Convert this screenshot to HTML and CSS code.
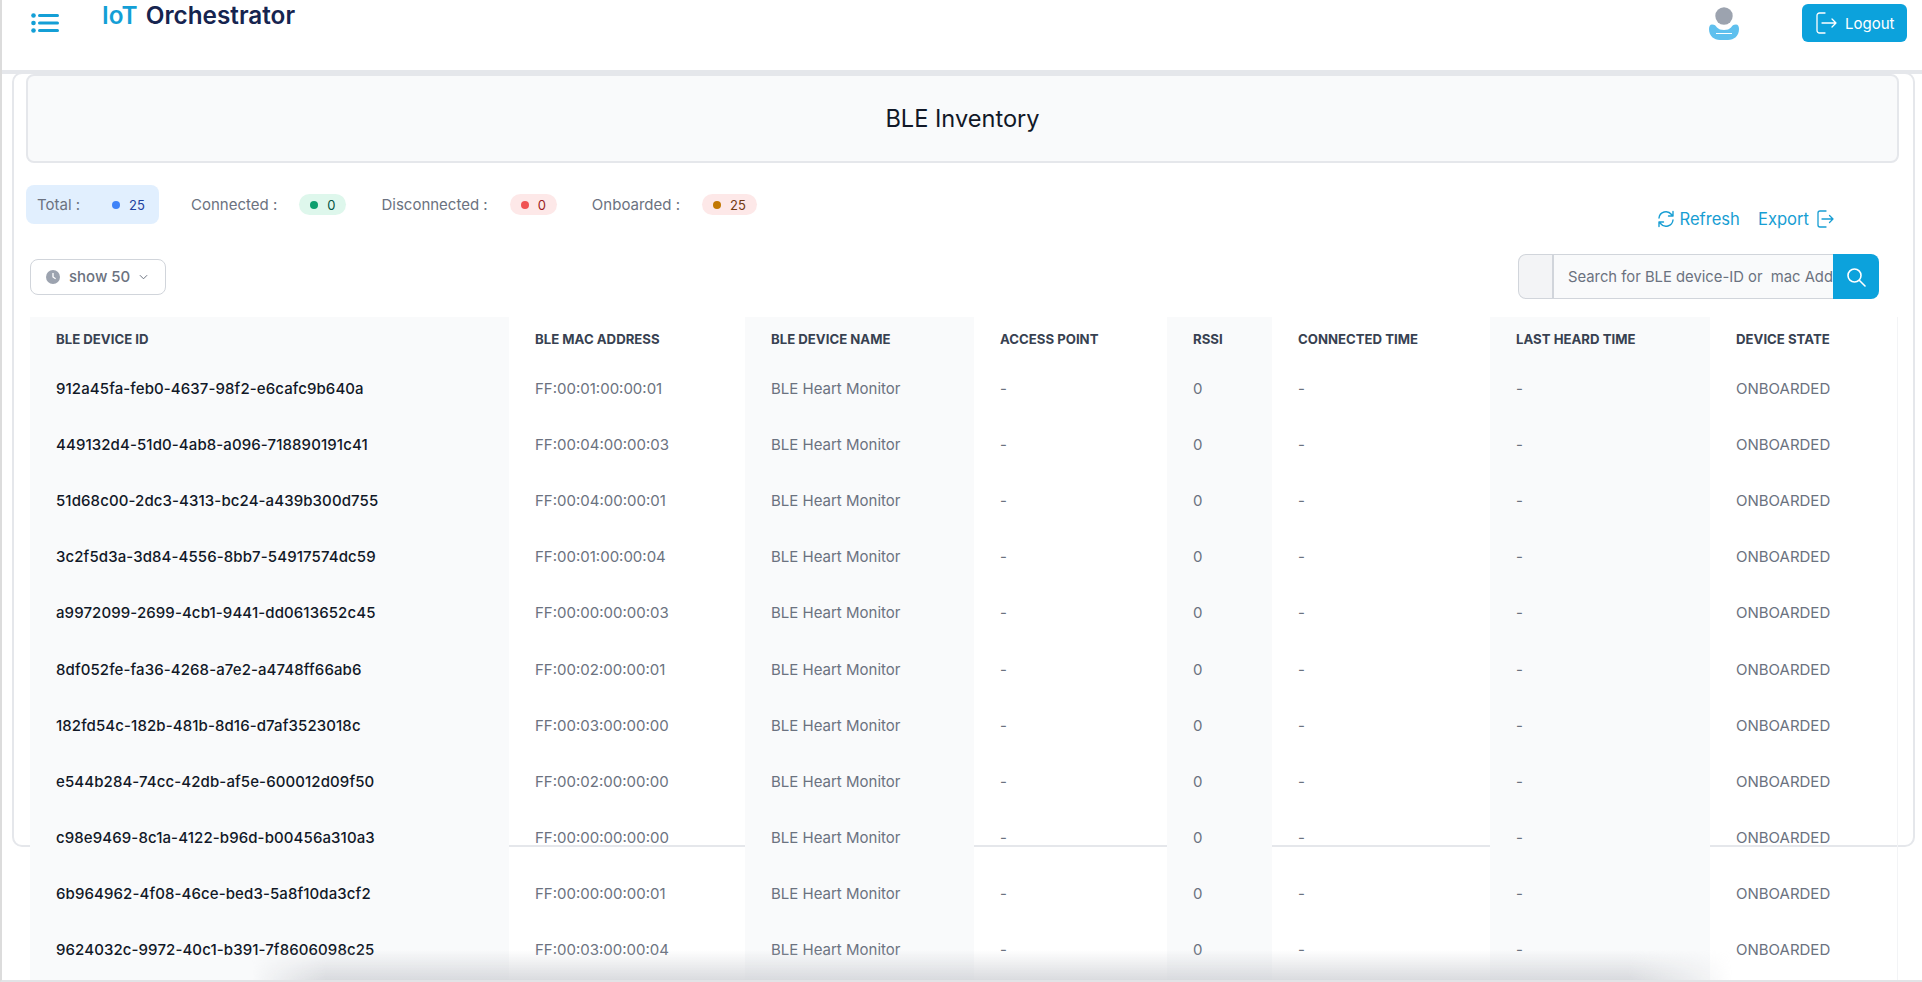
FILE: index.html
```html
<!DOCTYPE html>
<html lang="en">
<head>
    <meta charset="UTF-8">
    <meta name="viewport" content="width=device-width, initial-scale=1.0">
    <title>BLE Inventory</title>
    <link rel="stylesheet" href="styles.css">
</head>
<body>
    <header class="topbar">
        <svg class="menu-icon" viewBox="0 0 28 20" width="28" height="20">
            <circle cx="2.5" cy="2.5" r="2.3"/><circle cx="2.5" cy="10" r="2.3"/><circle cx="2.5" cy="17.5" r="2.3"/>
            <rect x="7" y="1" width="21" height="3" rx="1.5"/><rect x="7" y="8.5" width="21" height="3" rx="1.5"/><rect x="7" y="16" width="21" height="3" rx="1.5"/>
        </svg>
        <div class="logo"><span class="logo-iot">IoT</span> Orchestrator</div>
        <svg class="user-icon" viewBox="0 0 30 34" width="30" height="34">
            <circle cx="15" cy="9" r="8.7" fill="#9ca3af"/>
            <path d="M3 17.5c3 0 3.500 1 5 3 1.500 1.700 4 2.500 7 2.500s5.500-.8 7-2.500c1.500-2 2-3 5-3 2 0 3 1.800 3 4.500 0 7-5 11-11 11H11C5 33 0 29 0 22c0-2.700 1-4.500 3-4.500z" fill="#5fc0ee"/>
            <rect x="7" y="26" width="16" height="1" fill="#fff"/>
        </svg>
        <button class="logout-btn">
            <svg viewBox="0 0 21 22" width="21" height="22" fill="none" stroke="#fff" stroke-width="1.3" stroke-linecap="round" stroke-linejoin="round">
                <path d="M9 1H3.500A2.500 2.500 0 0 0 1 3.500v15A2.500 2.500 0 0 0 3.500 21H9"/><path d="M6 11h14M16 7l4 4-4 4"/>
            </svg>
            Logout
        </button>
    </header>

    <main class="card">
        <div class="title-box"><h1>BLE Inventory</h1></div>

        <div class="summary-row">
            <div class="stats">
                <div class="stat stat-active">Total : <span class="badge badge-blue"><i></i>25</span></div>
                <div class="stat">Connected : <span class="badge badge-green"><i></i>0</span></div>
                <div class="stat">Disconnected : <span class="badge badge-red"><i></i>0</span></div>
                <div class="stat">Onboarded : <span class="badge badge-orange"><i></i>25</span></div>
            </div>
            <div class="actions">
                <a class="action action-refresh">
                    <svg viewBox="0 0 18 18" width="18" height="18" fill="none" stroke="currentColor" stroke-width="1.4" stroke-linecap="round" stroke-linejoin="round">
                        <path d="M2 8a7 7 0 0 1 12.500-3.500L16 6M16 1.500V6h-4.500"/><path d="M16 10a7 7 0 0 1-12.500 3.500L2 12M2 16.500V12h4.500"/>
                    </svg>
                    Refresh
                </a>
                <a class="action action-export">
                    Export
                    <svg viewBox="0 0 17 18" width="17" height="18" fill="none" stroke="currentColor" stroke-width="1.3" stroke-linecap="round" stroke-linejoin="round">
                        <path d="M9 1H3A2 2 0 0 0 1 3v12a2 2 0 0 0 2 2h6"/><path d="M5 9h11M12.500 5.500 16 9l-3.500 3.500"/>
                    </svg>
                </a>
            </div>
        </div>

        <div class="toolbar">
            <button class="show-btn">
                <svg viewBox="0 0 16 16" width="14" height="14"><circle cx="8" cy="8" r="8" fill="#9ca3af"/><path d="M8 3.500V8l3 2" fill="none" stroke="#fff" stroke-width="1.500"/></svg>
                show 50
                <svg viewBox="0 0 10 6" width="9" height="6" fill="none" stroke="#6b7280" stroke-width="1.100"><path d="M1 1l4 4 4-4"/></svg>
            </button>
            <form class="search">
                <span class="search-addon"></span>
                <input class="search-input" type="text" placeholder="Search for BLE device-ID or  mac Address">
                <button class="search-btn" type="button">
                    <svg viewBox="0 0 20 20" width="20" height="20" fill="none" stroke="#fff" stroke-width="1.600" stroke-linecap="round"><circle cx="8.500" cy="8.500" r="6.500"/><path d="M13.500 13.500 19 19"/></svg>
                </button>
            </form>
        </div>

        <div class="table-wrap">
            <table class="device-table">
                <colgroup>
                    <col class="c-id"><col class="c-mac"><col class="c-name"><col class="c-ap">
                    <col class="c-rssi"><col class="c-conn"><col class="c-heard"><col class="c-state">
                </colgroup>
                <thead>
                    <tr>
                        <th>BLE Device ID</th><th>BLE MAC Address</th><th>BLE Device Name</th><th>Access Point</th>
                        <th>RSSI</th><th>Connected Time</th><th>Last Heard Time</th><th>Device State</th>
                    </tr>
                </thead>
                <tbody>
                    <tr><td>912a45fa-feb0-4637-98f2-e6cafc9b640a</td><td>FF:00:01:00:00:01</td><td>BLE Heart Monitor</td><td>-</td><td>0</td><td>-</td><td>-</td><td>ONBOARDED</td></tr>
                    <tr><td>449132d4-51d0-4ab8-a096-718890191c41</td><td>FF:00:04:00:00:03</td><td>BLE Heart Monitor</td><td>-</td><td>0</td><td>-</td><td>-</td><td>ONBOARDED</td></tr>
                    <tr><td>51d68c00-2dc3-4313-bc24-a439b300d755</td><td>FF:00:04:00:00:01</td><td>BLE Heart Monitor</td><td>-</td><td>0</td><td>-</td><td>-</td><td>ONBOARDED</td></tr>
                    <tr><td>3c2f5d3a-3d84-4556-8bb7-54917574dc59</td><td>FF:00:01:00:00:04</td><td>BLE Heart Monitor</td><td>-</td><td>0</td><td>-</td><td>-</td><td>ONBOARDED</td></tr>
                    <tr><td>a9972099-2699-4cb1-9441-dd0613652c45</td><td>FF:00:00:00:00:03</td><td>BLE Heart Monitor</td><td>-</td><td>0</td><td>-</td><td>-</td><td>ONBOARDED</td></tr>
                    <tr><td>8df052fe-fa36-4268-a7e2-a4748ff66ab6</td><td>FF:00:02:00:00:01</td><td>BLE Heart Monitor</td><td>-</td><td>0</td><td>-</td><td>-</td><td>ONBOARDED</td></tr>
                    <tr><td>182fd54c-182b-481b-8d16-d7af3523018c</td><td>FF:00:03:00:00:00</td><td>BLE Heart Monitor</td><td>-</td><td>0</td><td>-</td><td>-</td><td>ONBOARDED</td></tr>
                    <tr><td>e544b284-74cc-42db-af5e-600012d09f50</td><td>FF:00:02:00:00:00</td><td>BLE Heart Monitor</td><td>-</td><td>0</td><td>-</td><td>-</td><td>ONBOARDED</td></tr>
                    <tr><td>c98e9469-8c1a-4122-b96d-b00456a310a3</td><td>FF:00:00:00:00:00</td><td>BLE Heart Monitor</td><td>-</td><td>0</td><td>-</td><td>-</td><td>ONBOARDED</td></tr>
                    <tr><td>6b964962-4f08-46ce-bed3-5a8f10da3cf2</td><td>FF:00:00:00:00:01</td><td>BLE Heart Monitor</td><td>-</td><td>0</td><td>-</td><td>-</td><td>ONBOARDED</td></tr>
                    <tr><td>9624032c-9972-40c1-b391-7f8606098c25</td><td>FF:00:03:00:00:04</td><td>BLE Heart Monitor</td><td>-</td><td>0</td><td>-</td><td>-</td><td>ONBOARDED</td></tr>
                    <tr><td></td><td></td><td></td><td></td><td></td><td></td><td></td><td></td></tr>
                </tbody>
            </table>
        </div>
    </main>

    <div class="bottom-shade"></div>
</body>
</html>
```

FILE: styles.css
```css
* { box-sizing: border-box; }
html, body { height: 100%; }
body { margin: 0; height: 982px; overflow: hidden; position: relative; background: #fff; border-left: 2px solid #dcdcdc; border-bottom: 2px solid #e2e3e6; font-family: Inter, "Noto Sans", sans-serif; color: #6b7280; font-size: 15px; }

.topbar { height: 74px; display: flex; align-items: flex-start; border-bottom: 4px solid #e5e7eb; padding-right: 15px; }
.menu-icon { margin: 13px 0 0 29px; fill: #149fd6; flex: none; }
.logo { margin: 0 0 0 43px; font-size: 24.3px; line-height: 30px; font-weight: 600; color: #16244f; }
.logo-iot { color: #149fd6; margin-right: 2px; }
.user-icon { margin: 7px 63px 0 auto; }
.logout-btn { margin-top: 4px; width: 105px; height: 38px; display: flex; align-items: center; gap: 8px; padding: 0 0 0 14px; border: none; border-radius: 6px; background: #0ca2dc; color: #fff; font: 400 15px Inter, sans-serif; }

.card { height: 775px; margin: -2px 7px 0 10px; padding: 0 14px 0 12px; border: 2px solid #e5e7eb; border-radius: 10px; }
.title-box { height: 89px; display: flex; align-items: center; justify-content: center; background: #f9fafb; border: 2px solid #e5e7eb; border-radius: 8px; }
.title-box h1 { margin: 0; font-size: 23.6px; font-weight: 400; color: #111827; }

.summary-row { margin-top: 22px; display: flex; justify-content: space-between; align-items: flex-start; padding-right: 65px; }
.stats { display: flex; gap: 35px; }
.stat { height: 39px; display: flex; align-items: center; gap: 22px; color: #6b7280; font-size: 15px; }
.stat-active { width: 133px; padding-left: 11px; margin-right: -3px; gap: 21px; background: #e1effe; border-radius: 8px; }
.badge { height: 21px; display: inline-flex; align-items: center; padding: 0 11px; border-radius: 11px; font-size: 13px; font-weight: 400; }
.badge i { width: 8px; height: 8px; margin-right: 9px; border-radius: 50%; }
.badge-blue { color: #1e429f; }
.badge-blue i { background: #3f83f8; }
.badge-green { background: #def7ec; color: #03543f; }
.badge-green i { background: #0e9f6e; }
.badge-red { background: #fde8e8; color: #9b1c1c; }
.badge-red i { background: #f05252; }
.badge-orange { background: #fde8e8; color: #723b13; }
.badge-orange i { background: #c27803; }

.actions { display: flex; gap: 18px; margin-top: 23px; }
.action { display: flex; align-items: center; color: #189ed3; font-size: 16.6px; line-height: 22px; }
.action-refresh { gap: 4px; }
.action-export { gap: 8px; }

.toolbar { margin: 24px 20px 0 4px; display: flex; justify-content: space-between; align-items: center; }
.show-btn { width: 136px; height: 36px; display: flex; align-items: center; gap: 9px; padding: 0 0 0 15px; background: #fff; border: 1px solid #d1d5db; border-radius: 8px; color: #6b7280; font: 500 15px Inter, sans-serif; }
.search { width: 361px; height: 45px; display: flex; }
.search-addon { width: 36px; background: #f3f4f6; border: 1px solid #d1d5db; border-right-width: 2px; border-radius: 8px 0 0 8px; }
.search-input { flex: 1; min-width: 0; padding: 0 0 0 14px; background: #f9fafb; border: 1px solid #d1d5db; border-width: 1px 0; font: 14.8px Inter, sans-serif; color: #111827; outline: none; }
.search-input::placeholder { color: #6b7280; opacity: 1; }
.search-btn { width: 46px; display: flex; align-items: center; justify-content: center; padding: 0; background: #0ca2dc; border: none; border-radius: 0 8px 8px 0; }

.table-wrap { margin: 18px 0 0 4px; width: 1867px; height: 664px; overflow: hidden; box-shadow: 1px 0 0 #f3f4f6; }
.device-table { width: 1867px; table-layout: fixed; border-collapse: collapse; }
.c-id { width: 479px; }
.c-mac { width: 236px; }
.c-name { width: 229px; }
.c-ap { width: 193px; }
.c-rssi { width: 105px; }
.c-conn { width: 218px; }
.c-heard { width: 220px; }
.c-state { width: 187px; }
.device-table th { height: 43px; padding: 0 0 0 26px; text-align: left; font-size: 13.2px; font-weight: 700; text-transform: uppercase; color: #374151; white-space: nowrap; }
.device-table td { height: 56.2px; padding: 0 0 0 26px; white-space: nowrap; color: #6b7280; }
.device-table td:first-child { color: #111827; font-weight: 500; letter-spacing: .1px; }
.device-table th:nth-child(odd), .device-table td:nth-child(odd) { background: #f9fafb; }
.device-table th:last-child, .device-table td:last-child { background: transparent; }

.bottom-shade { position: absolute; left: 250px; bottom: 0; width: 1480px; height: 30px; pointer-events: none; background: linear-gradient(rgba(205, 207, 212, 0), rgba(205, 207, 212, .75)); -webkit-mask-image: linear-gradient(90deg, transparent, #000 5%, #000 93%, transparent); mask-image: linear-gradient(90deg, transparent, #000 5%, #000 93%, transparent); }
```
